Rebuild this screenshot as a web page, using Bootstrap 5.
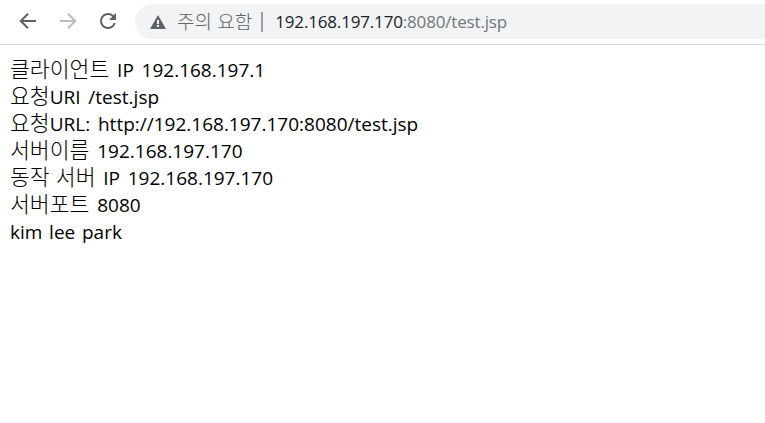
<!DOCTYPE html>
<html lang="ko">
<head>
<meta charset="utf-8">
<meta name="viewport" content="width=device-width, initial-scale=1">
<title>test.jsp</title>
<link href="https://cdn.jsdelivr.net/npm/bootstrap@5.3.0/dist/css/bootstrap.min.css" rel="stylesheet">
<style>
body{background:#fff;color:#000;overflow:hidden;font-family:"Open Sans","Noto Sans CJK KR",sans-serif;font-size:19px}
.toolbar{height:45px;border-bottom:1px solid #dadce0;padding:4px 0 5px 16px}
.tool{width:24px;height:24px;flex:none;margin-right:16px;margin-top:-2px}
.address{height:35px;background:#f1f3f4;border-radius:18px 0 0 18px;margin-left:-1px;padding-left:15px;color:#73777b;font-size:17px;line-height:35px;white-space:pre}
.warn{width:16px;height:14px;flex:none;margin:1px 11px 0 0}
.ko{font-family:"Noto Sans CJK KR",sans-serif;font-weight:300;font-size:21.6px;line-height:1;word-spacing:0}
.address .ko{font-size:19px;color:#5f6368;margin-top:-3px}
.divider{width:2px;height:20px;background:#9aa0a6;margin:0 12px 0 9px}
.url{letter-spacing:-.17px}
.host{color:#202124}
.output{padding:12px 10px}
.line{height:27px;line-height:27px;white-space:pre;word-spacing:2.8px}
.names{word-spacing:1.8px}
</style>
</head>
<body>
<header class="toolbar d-flex align-items-center">
<svg class="tool" viewBox="0 0 24 24" fill="none" stroke="#5f6368" stroke-width="2"><path d="M20 12H5M12 4.7L4.7 12l7.3 7.3"/></svg>
<svg class="tool" viewBox="0 0 24 24" fill="none" stroke="#babcbe" stroke-width="2"><path d="M4 12h15M12 4.7l7.3 7.3-7.3 7.3"/></svg>
<svg class="tool" viewBox="0 0 24 24"><path fill="#5f6368" d="M17.65 6.35A7.96 7.96 0 0 0 12 4a8 8 0 1 0 7.73 10h-2.08A6 6 0 1 1 12 6c1.66 0 3.14.69 4.22 1.78L13 11h7V4z"/></svg>
<div class="address d-flex align-items-center flex-grow-1">
<svg class="warn" viewBox="0 0 16 14"><path fill="#5f6368" d="M8 0l8 14H0z"/><path fill="#f1f3f4" d="M7 5h2v4H7zM7 10h2v2H7z"/></svg><span class="ko">주의 요함</span><span class="divider"></span><span class="url"><span class="host">192.168.197.170</span>:8080/test.jsp</span></div>
</header>
<main class="output">
<div class="line"><span class="ko">클라이언트</span> IP 192.168.197.1</div>
<div class="line"><span class="ko">요청</span>URI /test.jsp</div>
<div class="line"><span class="ko">요청</span>URL: http://192.168.197.170:8080/test.jsp</div>
<div class="line"><span class="ko">서버이름</span> 192.168.197.170</div>
<div class="line"><span class="ko">동작 서버</span> IP 192.168.197.170</div>
<div class="line"><span class="ko">서버포트</span> 8080</div>
<div class="line names">kim lee park</div>
</main>
<script src="https://cdn.jsdelivr.net/npm/bootstrap@5.3.0/dist/js/bootstrap.bundle.min.js"></script>
</body>
</html>
